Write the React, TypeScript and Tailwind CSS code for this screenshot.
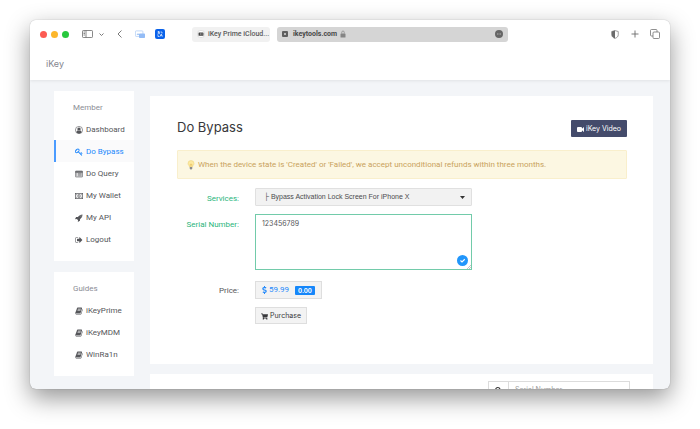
import { useState } from "react";
import type { ReactNode } from "react";
import { FaSearch, FaShoppingCart, FaDollarSign } from "react-icons/fa";

function Glyph({ d, className = "size-2" }: { d: string; className?: string }) {
  return (
    <svg className={`${className} shrink-0`} viewBox="0 0 1792 1792" fill="currentColor" aria-hidden="true">
      <path d={d} />
    </svg>
  );
}

const keyPath =
  "M832 512q0-80-56-136t-136-56-136 56-56 136q0 42 19 83-41-19-83-19-80 0-136 56t-56 136 56 136 136 56 136-56 56-136q0-42-19-83 41 19 83 19 80 0 136-56t56-136zm851 704q0 17-49 66t-66 49q-9 0-28.5-16t-36.5-33-38.5-40-24.5-26l-96 96 220 220q28 28 28 68 0 42-39 81t-81 39q-40 0-68-28l-671-671q-176 131-365 131-163 0-265.5-102.5t-102.5-265.5q0-160 95-313t248-248 313-95q163 0 265.5 102.5t102.5 265.5q0 189-131 365l355 355 96-96q-3-3-26-24.5t-40-38.5-33-36.5-16-28.5q0-17 49-66t66-49q13 0 23 10 6 6 46 44.5t82 79.5 86.5 86 73 78 28.5 41z";
const rocketPath =
  "M1440 448q0-40-28-68t-68-28-68 28-28 68 28 68 68 28 68-28 28-68zm224-288q0 249-75.5 430.5t-253.5 360.5q-81 80-195 176l-20 379q-2 16-16 26l-384 224q-7 4-16 4-12 0-23-9l-64-64q-13-14-8-32l85-276-281-281-276 85q-3 1-9 1-14 0-23-9l-64-64q-17-19-5-39l224-384q10-14 26-16l379-20q96-114 176-195 188-187 358-258t431-71q14 0 24 9.5t10 22.5z";
const signOutPath =
  "M704 1440q0 4 1 20t.5 26.5-3 23.5-10 19.5-20.5 6.5h-320q-119 0-203.5-84.5t-84.5-203.5v-704q0-119 84.5-203.5t203.5-84.5h320q13 0 22.5 9.5t9.5 22.5q0 4 1 20t.5 26.5-3 23.5-10 19.5-20.5 6.5h-320q-66 0-113 47t-47 113v704q0 66 47 113t113 47h312l11.5 1 11.5 3 8 5.5 7 9 2 13.5zm928-544q0 26-19 45l-544 544q-19 19-45 19t-45-19-19-45v-288h-448q-26 0-45-19t-19-45v-384q0-26 19-45t45-19h448v-288q0-26 19-45t45-19 45 19l544 544q19 19 19 45z";
const bookPath =
  "M1703 478q40 57 18 129l-275 906q-19 64-76.5 107.5t-122.5 43.5h-923q-77 0-148.5-53.5t-99.5-131.5q-24-67-2-127 0-4 3-27t4-37q1-8-3-21.5t-3-19.5q2-11 8-21t16.5-23.5 16.5-23.5q23-38 45-91.5t30-91.5q3-10 .5-30t-.5-28q3-11 17-28t17-23q21-36 42-92t25-90q1-9-2.5-32t.5-28q4-13 22-30.5t22-22.5q19-26 42.5-84.5t27.5-96.5q1-8-3-25.5t-2-26.5q2-8 9-18t18-23 17-21q8-12 16.5-30.5t15-35 16-36 19.5-32 26.5-23.5 36-11.5 47.5 5.5l-1 3q38-9 51-9h761q74 0 114 56t18 130l-274 906q-36 119-71.5 153.5t-128.5 34.5h-869q-27 0-38 15-11 16-1 43 24 70 144 70h923q29 0 56-15.5t35-41.5l300-987q7-22 5-57 38 15 59 43zm-1064 2q-4 13 2 22.5t20 9.5h608q13 0 25.5-9.5t16.5-22.5l21-64q4-13-2-22.5t-20-9.5h-608q-13 0-25.5 9.5t-16.5 22.5zm-83 256q-4 13 2 22.5t20 9.5h608q13 0 25.5-9.5t16.5-22.5l21-64q4-13-2-22.5t-20-9.5h-608q-13 0-25.5 9.5t-16.5 22.5z";
const videoPath =
  "M1792 352v1088q0 42-39 59-13 5-25 5-27 0-45-19l-403-403v166q0 119-84.5 203.5t-203.5 84.5h-704q-119 0-203.5-84.5t-84.5-203.5v-704q0-119 84.5-203.5t203.5-84.5h704q119 0 203.5 84.5t84.5 203.5v165l403-402q18-19 45-19 12 0 25 5 39 17 39 59z";

function UserIcon() {
  return (
    <svg className="size-2 shrink-0" viewBox="0 0 16 16" fill="currentColor" aria-hidden="true">
      <circle cx="8" cy="8" r="7.2" fill="none" stroke="currentColor" strokeWidth="1.2" />
      <circle cx="8" cy="6.200" r="3.400" />
      <path d="M2.800 12.500C3.200 10 4.500 8.800 5.500 8.800c1.500 1.300 3.500 1.300 5 0 1 0 2.300 1.200 2.700 3.700C12 14 10 15 8 15s-4-1-5.200-2.500z" />
    </svg>
  );
}

function ListIcon() {
  return (
    <svg className="size-2 shrink-0" viewBox="0 0 16 16" fill="none" stroke="currentColor" aria-hidden="true">
      <rect x="0.700" y="2.200" width="14.600" height="11.600" rx="1.200" strokeWidth="1.400" />
      <path d="M1 3.800h14" strokeWidth="3" />
      <path d="M2.500 7h1.500M5.200 7h8.300M2.500 9.200h1.500M5.200 9.200h8.300M2.500 11.400h1.500M5.200 11.400h8.300" strokeWidth="1.200" />
    </svg>
  );
}

function MoneyIcon() {
  return (
    <svg className="size-2 shrink-0" viewBox="0 0 16 16" fill="none" stroke="currentColor" aria-hidden="true">
      <rect x="0.700" y="2.700" width="14.600" height="10.600" strokeWidth="1.400" />
      <path d="M2 6a2 2 0 0 0 2-2M12 4a2 2 0 0 0 2 2M2 10a2 2 0 0 1 2 2M12 12a2 2 0 0 1 2-2" />
      <ellipse cx="8" cy="8" rx="2.600" ry="3.200" strokeWidth="1.200" />
      <path d="M7 7l1-.800v3.600M7 9.800h2" />
    </svg>
  );
}

interface NavItem {
  label: string;
  icon: ReactNode;
  active?: boolean;
}

const memberItems: NavItem[] = [
  { label: "Dashboard", icon: <UserIcon /> },
  { label: "Do Bypass", icon: <Glyph d={keyPath} />, active: true },
  { label: "Do Query", icon: <ListIcon /> },
  { label: "My Wallet", icon: <MoneyIcon /> },
  { label: "My API", icon: <Glyph d={rocketPath} /> },
  { label: "Logout", icon: <Glyph d={signOutPath} /> },
];

const guideItems: NavItem[] = [
  { label: "iKeyPrime", icon: <Glyph d={bookPath} /> },
  { label: "iKeyMDM", icon: <Glyph d={bookPath} /> },
  { label: "WinRa1n", icon: <Glyph d={bookPath} /> },
];

function SideCard({ title, items }: { title: string; items: NavItem[] }) {
  return (
    <nav aria-label={title} className="bg-white py-[11px] font-['Roboto',sans-serif] text-[8px]">
      <h2 className="mb-[5px] pl-[19px] leading-[11px] text-[#8b8d95]">{title}</h2>
      {items.map((item) => (
        <a
          key={item.label}
          href="#"
          className={`flex h-[22px] items-center gap-[3px] border-l-2 pt-[2px] pl-[19px] whitespace-nowrap ${
            item.active
              ? "border-[#4a9bff] bg-[#fafafb] text-[#2389fb]"
              : "border-transparent text-[#55565a]"
          }`}
        >
          {item.icon}
          {item.label}
        </a>
      ))}
    </nav>
  );
}

function BrowserBar() {
  return (
    <div className="flex h-7 shrink-0 items-center px-[10px] text-[#6b6b6b]">
      <div className="flex gap-[4px]">
        <span className="size-[7px] rounded-full bg-[#fc5b53]" />
        <span className="size-[7px] rounded-full bg-[#fcb72c]" />
        <span className="size-[7px] rounded-full bg-[#28c83d]" />
      </div>
      <button aria-label="Sidebar" className="ml-[13px]">
        <svg className="h-2 w-[11px]" viewBox="0 0 22 16" fill="none" stroke="currentColor" strokeWidth="1.600">
          <rect x="1" y="1" width="20" height="14" rx="1.500" />
          <path d="M8 1v14M3 4h3M3 7h3M3 10h3" />
        </svg>
      </button>
      <button aria-label="Tab groups" className="ml-[6px]">
        <svg className="size-[5px]" viewBox="0 0 10 10" fill="none" stroke="currentColor" strokeWidth="1.800">
          <path d="M1 3l4 4 4-4" />
        </svg>
      </button>
      <button aria-label="Back" className="ml-[13px]">
        <svg className="h-2 w-[5px]" viewBox="0 0 10 16" fill="none" stroke="currentColor" strokeWidth="1.800">
          <path d="M9 1L2 8l7 7" />
        </svg>
      </button>
      <button aria-label="Screen mirroring" className="ml-[13px]">
        <svg className="h-[9px] w-[10px]" viewBox="0 0 20 18">
          <rect x="0.800" y="1.800" width="15" height="11" rx="1.500" fill="#fff" stroke="#a9c9f5" strokeWidth="1.400" />
          <path d="M3 10l3-4 3 4z" fill="#a9c9f5" />
          <rect x="8" y="7" width="12" height="9" rx="1.500" fill="#93bcf6" />
        </svg>
      </button>
      <button aria-label="Translate" className="ml-[10px]">
        <svg className="size-[10px]" viewBox="0 0 20 20">
          <rect width="20" height="20" rx="4" fill="#0a62ea" />
          <g fill="none" stroke="#fff" strokeWidth="1.300">
            <path d="M5 6h5M7 4v2M5 10c2-1 3-2 4-4M6 7l4 3M11 6h3v3M6 11v4h3M10 15l2.500-5 2.500 5M11 13.500h3" />
          </g>
        </svg>
      </button>
      <div className="ml-[27px] flex min-w-0 flex-1 items-center gap-[7px]">
        <button className="flex h-[15px] w-[78px] shrink-0 items-center gap-[3px] rounded-[3px] bg-[#f1f1f1] pl-[5px] font-['Roboto',sans-serif] text-[7px] font-medium whitespace-nowrap text-[#5a5a5a]">
          <svg className="size-2 shrink-0" viewBox="0 0 16 16">
            <circle cx="8" cy="8" r="7.400" fill="#fff" stroke="#bbb" strokeWidth="0.800" />
            <rect x="3" y="5" width="10" height="6.500" rx="1" fill="#444" />
            <path d="M7 6v4M9 8l2-2M9 8l2 2" stroke="#ddd" strokeWidth="0.800" />
          </svg>
          iKey Prime iCloud...
        </button>
        <div className="flex h-[15px] max-w-[231px] flex-1 items-center rounded-[3px] bg-[#d5d5d5] px-[5px]">
          <button aria-label="Close tab">
            <svg className="size-[6px]" viewBox="0 0 12 12">
              <rect width="12" height="12" rx="2" fill="#5f5f5f" />
              <path d="M4 4l4 4M8 4l-4 4" stroke="#e5e5e5" strokeWidth="1.400" />
            </svg>
          </button>
          <span className="ml-[5px] font-['Roboto',sans-serif] text-[7px] font-bold text-[#484848]">ikeytools.com</span>
          <svg className="ml-[3px] h-2 w-[6px]" viewBox="0 0 12 16">
            <rect x="1" y="7" width="10" height="8" rx="1.200" fill="#858585" />
            <path d="M3.500 7V4.500a2.500 2.500 0 0 1 5 0V7" fill="none" stroke="#858585" strokeWidth="1.400" />
          </svg>
          <button aria-label="Page menu" className="ml-auto">
            <svg className="size-2" viewBox="0 0 16 16">
              <circle cx="8" cy="8" r="8" fill="#666" />
              <path d="M4 8h8" stroke="#c8c8c8" strokeWidth="1.600" strokeDasharray="2 1" />
            </svg>
          </button>
        </div>
      </div>
      <button aria-label="Privacy report" className="ml-4">
        <svg className="h-[9px] w-2" viewBox="0 0 16 18">
          <path d="M8 1.200l6.500 1.800v6.500c0 4-3 6-6.500 7.300-3.500-1.300-6.500-3.300-6.500-7.300V3z" fill="#fff" stroke="currentColor" strokeWidth="1.300" />
          <path d="M8 1.200v15.600c-3.500-1.300-6.500-3.300-6.500-7.300V3z" fill="currentColor" />
        </svg>
      </button>
      <button aria-label="New tab" className="ml-3">
        <svg className="size-2" viewBox="0 0 16 16" stroke="currentColor" strokeWidth="1.800">
          <path d="M8 1v14M1 8h14" />
        </svg>
      </button>
      <button aria-label="Tab overview" className="ml-[11px]">
        <svg className="size-[10px]" viewBox="0 0 20 20" fill="none" stroke="currentColor" strokeWidth="1.500">
          <path d="M6 14H3a2 2 0 0 1-2-2V3a2 2 0 0 1 2-2h9a2 2 0 0 1 2 2v3" />
          <rect x="6" y="6" width="13" height="13" rx="2" fill="#fff" />
        </svg>
      </button>
    </div>
  );
}

function BypassForm() {
  const [serial, setSerial] = useState("123456789");

  return (
    <form className="mt-[9px] grid grid-cols-[62px_minmax(0,217px)] gap-x-4 font-['Roboto',sans-serif] text-[8px] text-[#55565a]">
      <label htmlFor="service" className="pt-[5px] text-right leading-[11px] text-[#2bb57c]">
        Services:
      </label>
      <div className="relative h-[18px]">
        <select
          id="service"
          className="h-full w-full appearance-none rounded-[1px] border border-[#e0e0e0] bg-[#f2f2f2] pt-[1px] pl-2 font-['Liberation_Sans','DejaVu_Sans',sans-serif] text-[7px] text-[#4a4a4d]"
        >
          <option>├ Bypass Activation Lock Screen For iPhone X</option>
        </select>
        <svg className="pointer-events-none absolute top-2 right-[7px] h-[3px] w-[5px]" viewBox="0 0 10 6" fill="#333">
          <path d="M0 0h10L5 6z" />
        </svg>
      </div>

      <label htmlFor="serial" className="mt-2 pt-[5px] text-right leading-[11px] whitespace-nowrap text-[#2bb57c]">
        Serial Number:
      </label>
      <div className="relative mt-2 h-14">
        <textarea
          id="serial"
          value={serial}
          onChange={(e) => setSerial(e.target.value)}
          className="block h-full w-full resize-none border border-[#72cbaa] bg-white px-[6px] py-[3px] font-['Inter',sans-serif] text-[7px] leading-[11px] outline-none"
        />
        <svg className="absolute right-1 bottom-1 size-[11px]" viewBox="0 0 22 22">
          <circle cx="11" cy="11" r="11" fill="#2196fb" />
          <path d="M7 11l3 3 5.500-5.500" fill="none" stroke="#fff" strokeWidth="2.200" />
        </svg>
        <svg className="pointer-events-none absolute right-px bottom-px size-1" viewBox="0 0 8 8" stroke="#888">
          <path d="M0 8l8-8M4 8l4-4" />
        </svg>
      </div>

      <span className="mt-[11px] pt-1 text-right leading-[11px]">Price:</span>
      <div className="mt-[11px] flex h-[18px] w-[67px] items-center border border-[#dedede] bg-[#f3f3f3] pl-[6px] text-[#2389fb]">
        <FaDollarSign className="h-2 w-[5px]" />
        <span className="ml-[2px]">59.99</span>
        <span className="mr-[6px] ml-auto flex h-[9px] w-5 items-center justify-center rounded-[1px] bg-[#1687fa] font-['Inter',sans-serif] text-[6px] font-bold text-white">
          0.00
        </span>
      </div>

      <button
        type="button"
        className="col-start-2 mt-2 flex h-[17px] w-[52px] items-center justify-center gap-[2px] border border-[#dedede] bg-[#f3f3f3] pt-[1px] font-['Inter',sans-serif] text-[7px] text-[#38383b]"
      >
        <FaShoppingCart className="size-[7px]" />
        Purchase
      </button>
    </form>
  );
}

export default function App() {
  return (
    <div className="h-screen overflow-hidden bg-white px-[30px] pt-5 pb-10 font-['Inter','Liberation_Sans',sans-serif]">
      <div className="flex h-full flex-col overflow-hidden rounded-md bg-[#f3f5f8] shadow-[0_9px_24px_rgba(0,0,0,0.42),0_0_1px_rgba(0,0,0,0.4)]">
        <header className="z-10 bg-white shadow-[0_1px_3px_rgba(0,0,0,0.08)]">
          <BrowserBar />
          <div className="flex h-8 items-center px-4">
            <a href="#" className="pb-[1px] text-[9px] text-[#85868f]">
              iKey
            </a>
          </div>
        </header>

        <div className="flex min-h-0 flex-1 items-start gap-4 pr-[17px] pl-6">
          <aside className="flex w-20 shrink-0 flex-col gap-[11px] pt-[11px]">
            <SideCard title="Member" items={memberItems} />
            <SideCard title="Guides" items={guideItems} />
          </aside>

          <main className="flex min-w-0 flex-1 flex-col gap-[10px] pt-4">
            <section className="bg-white pt-6 pr-[26px] pb-10 pl-[27px]">
              <div className="flex h-[17px] items-center justify-between">
                <h1 className="pb-[2px] text-[13px] text-[#38383b]">Do Bypass</h1>
                <a
                  href="#"
                  className="flex h-[17px] w-14 items-center justify-center gap-[2px] rounded-[1px] bg-[#444b6b] pt-[1px] text-[7px] text-white"
                >
                  <Glyph d={videoPath} className="size-[7px]" />
                  iKey Video
                </a>
              </div>
              <div
                role="alert"
                className="mt-[13px] flex h-[29px] items-center gap-[3px] rounded-[1px] border border-[#f9efcc] bg-[#fcf7e2] px-[9px] font-['Roboto',sans-serif] text-[8px] text-[#c9a25c]"
              >
                <svg className="h-[10px] w-2 shrink-0" viewBox="0 0 16 20">
                  <path d="M8 1a6 6 0 0 0-6 6c0 3 3 4 3 7h6c0-3 3-4 3-7a6 6 0 0 0-6-6z" fill="#fdeaa0" stroke="#edcf78" />
                  <path d="M6.500 13V8l1.500 1 1.500-1v5" fill="none" stroke="#e0b34c" />
                  <path d="M5.500 14h5v3.500l-1.500 1.500h-2l-1.500-1.500z" fill="#8d8d8d" />
                </svg>
                When the device state is 'Created' or 'Failed', we accept unconditional refunds within three months.
              </div>
              <BypassForm />
            </section>

            <section className="flex justify-end bg-white px-[23px] pt-[7px] pb-6">
              <div className="flex h-[18px] w-[142px] border border-[#dcdcdc]">
                <label htmlFor="search" className="flex w-5 shrink-0 items-center justify-center border-r border-[#dcdcdc]">
                  <FaSearch className="size-[7px] text-[#333]" aria-label="Search" />
                </label>
                <input
                  id="search"
                  placeholder="Serial Number"
                  className="w-full min-w-0 px-[6px] text-[7px] outline-none placeholder:text-[#999]"
                />
              </div>
            </section>
          </main>
        </div>
      </div>
    </div>
  );
}
